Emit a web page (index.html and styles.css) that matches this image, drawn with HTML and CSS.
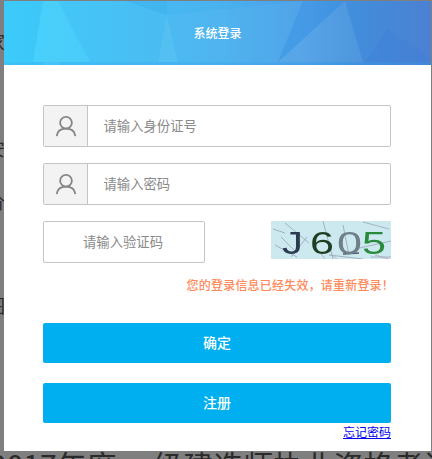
FILE: index.html
```html
<!DOCTYPE html>
<html lang="zh-CN">
<head>
<meta charset="utf-8">
<title>系统登录</title>
<link rel="stylesheet" href="styles.css">
</head>
<body>
<div class="page">
  <p class="bg-line line-a">家</p>
  <p class="bg-line line-b">安</p>
  <p class="bg-line line-c">价</p>
  <p class="bg-line line-d">图</p>
  <p class="bg-title">2017年度 一级建造师执业资格考试</p>
</div>
<div class="backdrop"></div>
<section class="modal">
  <header class="modal-head">
    <svg class="head-art" viewBox="0 0 427 64" preserveAspectRatio="none" aria-hidden="true">
      <defs>
        <linearGradient id="hg" x1="0" y1="0" x2="1" y2="0">
          <stop offset="0" stop-color="#3bcbfb"/>
          <stop offset=".5" stop-color="#4ab2ef"/>
          <stop offset=".7" stop-color="#4b9fe7"/>
          <stop offset=".82" stop-color="#418edc"/>
          <stop offset="1" stop-color="#4c80d2"/>
        </linearGradient>
      </defs>
      <rect width="427" height="64" fill="url(#hg)"/>
      <polygon points="39,0 54,0 86,61 29,61" fill="#5ee0ff" fill-opacity=".35"/>
      <polygon points="39,61 56,61 56,64 39,64" fill="#5ee0ff" fill-opacity=".25"/>
      <polygon points="54,0 122,0 163,14 174,61 86,61" fill="#66d8fb" fill-opacity=".14"/>
      <polygon points="122,0 163,14 163,0" fill="#38aee8" fill-opacity=".35"/>
      <polygon points="163,14 299,0 274,61 174,61" fill="#7ccdf5" fill-opacity=".1"/>
      <polygon points="163,14 174,61 154,61" fill="#7ad3f7" fill-opacity=".2"/>
      <polygon points="299,0 341,0 274,61" fill="#3d93e2" fill-opacity=".35"/>
      <polygon points="341,0 359,61 274,61" fill="#86bdec" fill-opacity=".2"/>
      <polygon points="383,28 427,57 427,64 359,64" fill="#3d7fd8" fill-opacity=".3"/>
      <polygon points="0,61 427,61 427,64 0,64" fill="#3aa6ea" fill-opacity=".2"/>
    </svg>
    <h1 class="modal-title">系统登录</h1>
  </header>
  <form class="modal-body">
    <div class="field">
      <span class="field-icon">
        <svg class="user-icon" viewBox="0 0 24 24" aria-hidden="true"><circle cx="12" cy="8.500" r="6.400"/><path d="M1.800 23c.6-5.600 4.600-8.200 10.200-8.200s9.600 2.600 10.200 8.200"/></svg>
      </span>
      <input class="field-input" type="text" placeholder="请输入身份证号">
    </div>
    <div class="field">
      <span class="field-icon">
        <svg class="user-icon" viewBox="0 0 24 24" aria-hidden="true"><circle cx="12" cy="8.500" r="6.400"/><path d="M1.800 23c.6-5.600 4.600-8.200 10.200-8.200s9.600 2.600 10.200 8.200"/></svg>
      </span>
      <input class="field-input" type="text" placeholder="请输入密码">
    </div>
    <div class="captcha-row">
      <input class="captcha-input" type="text" placeholder="请输入验证码">
      <svg class="captcha-img" viewBox="0 0 120 38" role="img" aria-label="验证码">
        <rect width="120" height="38" fill="#cbe9ef"/>
        <path class="noise" d="M14 2 38 22M4 24 26 36M10 16 24 30M52 0 62 38M72 4 78 34M92 1 118 8M20 36 36 16M58 34 92 38M100 36 120 36M2 8 14 12M84 28 120 20"/>
        <path class="noise-pink" d="M48 30 54 38M60 33 66 38M104 34 118 38"/>
        <path class="noise-dark" d="M72 33 88 32"/>
        <text class="cap c1" x="11" y="33" textLength="21" lengthAdjust="spacingAndGlyphs">J</text>
        <text class="cap c2" x="39" y="33" textLength="24" lengthAdjust="spacingAndGlyphs">6</text>
        <text class="cap c3" x="66" y="33" textLength="25" lengthAdjust="spacingAndGlyphs">0</text>
        <text class="cap c4" x="91" y="33" textLength="24" lengthAdjust="spacingAndGlyphs">5</text>
      </svg>
    </div>
    <p class="error-msg">您的登录信息已经失效，请重新登录！</p>
    <button class="btn btn-first" type="button"><span class="btn-label">确定</span></button>
    <button class="btn btn-second" type="button"><span class="btn-label">注册</span></button>
    <div class="forgot"><a href="#">忘记密码</a></div>
  </form>
</section>
</body>
</html>
```
FILE: styles.css
```css
* { box-sizing: border-box; }
html, body { margin: 0; height: 459px; overflow: hidden; }
body {
  position: relative;
  background: #fff;
  font-family: "Noto Sans CJK SC", "Liberation Sans", sans-serif;
}
.page { position: relative; height: 459px; overflow: hidden; padding-top: 28px; color: #555; }
.bg-line { margin: 0 0 0 -13px; height: 26px; font-size: 18px; line-height: 26px; }
.line-b { margin-top: 81px; }
.line-c { margin-top: 27px; }
.line-d { margin-top: 78px; }
.bg-title {
  position: absolute;
  left: -10px;
  top: 447px;
  margin: 0;
  font-size: 30px;
  line-height: 34px;
  white-space: nowrap;
}
.backdrop { position: absolute; inset: 0; background: rgba(0, 0, 0, .5); }
.modal {
  position: absolute;
  left: 4px;
  top: 1px;
  width: 427px;
  height: 450px;
  background: #fff;
}
.modal-head { position: relative; height: 64px; display: flex; align-items: center; justify-content: center; }
.head-art { position: absolute; inset: 0; width: 100%; height: 100%; display: block; }
.modal-title { position: relative; margin: 0; color: #fff; font-size: 12px; font-weight: 500; line-height: 64px; }
.modal-body { padding: 40px 40px 0 39px; }
.field {
  display: flex;
  height: 42px;
  margin-bottom: 16px;
  border: 1px solid #c4c4c4;
  border-radius: 2px;
}
.field-icon {
  flex: 0 0 44px;
  display: flex;
  align-items: center;
  justify-content: center;
  background: #f3f3f3;
  border-right: 1px solid #c4c4c4;
}
.user-icon { width: 22px; height: 24px; fill: none; stroke: #868686; stroke-width: 2; }
.field-input {
  flex: 1;
  min-width: 0;
  border: 0;
  outline: 0;
  padding: 0 0 2px 15.500px;
  background: transparent;
  font: 13.333px "Noto Sans CJK SC", sans-serif;
}
.field-input::placeholder, .captcha-input::placeholder { color: #8a8a8a; opacity: 1; }
.captcha-row { display: flex; justify-content: space-between; align-items: flex-start; }
.captcha-input {
  width: 162px;
  height: 42px;
  padding: 0 2px 2px 0;
  border: 1px solid #c4c4c4;
  border-radius: 2px;
  outline: 0;
  text-align: center;
  font: 13.333px "Noto Sans CJK SC", sans-serif;
}
.captcha-img { width: 120px; height: 38px; display: block; filter: blur(.4px); }
.noise { fill: none; stroke: #9aa2b6; stroke-width: .8; }
.noise-pink { fill: none; stroke: #b8a0c0; stroke-width: .8; }
.noise-dark { fill: none; stroke: #4a5a6a; stroke-width: 1.500; }
.cap { font-family: "Liberation Sans", sans-serif; font-size: 32px; }
.c1 { fill: #2b3c50; }
.c2 { fill: #1f3d22; }
.c3 { fill: #70808a; }
.c4 { fill: #2a8a3c; }
.error-msg {
  margin: 13px -3px 0 0;
  height: 18px;
  color: #ff8a5c;
  font-size: 12px;
  font-weight: 500;
  letter-spacing: .2px;
  line-height: 18px;
  text-align: right;
  white-space: nowrap;
}
.btn {
  display: block;
  width: 100%;
  height: 40px;
  padding: 0 0 2px;
  border: 0;
  border-radius: 2px;
  background: #00aff0;
  color: #fff;
  font: 500 14px "Noto Sans CJK SC", sans-serif;
}
.btn-first { margin-top: 29px; }
.btn-second { margin-top: 20px; }
.forgot { margin-top: 1px; text-align: right; font-size: 12px; line-height: 15px; }
.forgot a { color: #0000ee; text-decoration: underline; }
```
